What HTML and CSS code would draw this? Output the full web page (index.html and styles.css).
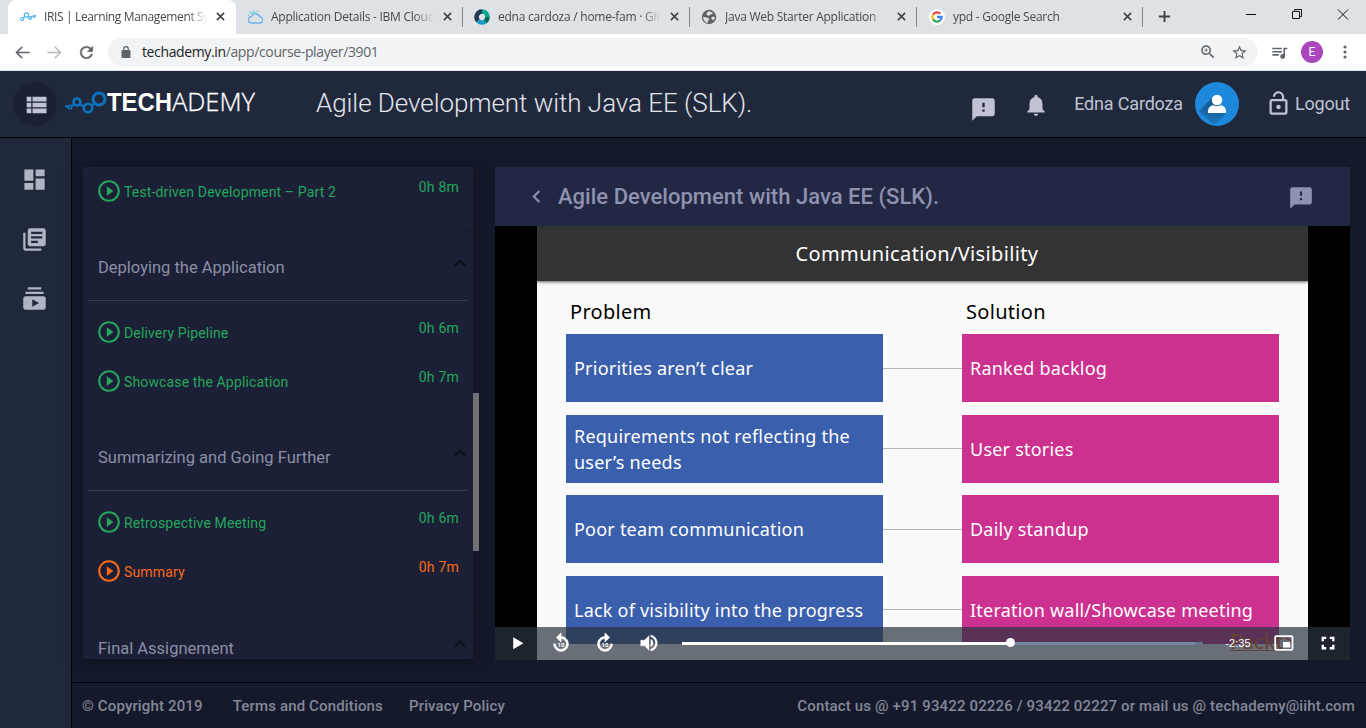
FILE: index.html
```html
<!DOCTYPE html>
<html lang="en">
<head>
<meta charset="utf-8">
<title>IRIS | Learning Management System</title>
<link rel="stylesheet" href="styles.css">
</head>
<body>
<svg class="sprite" aria-hidden="true">
  <symbol id="play" viewBox="0 0 24 24"><path d="M10 16.5l6-4.5-6-4.5v9zM12 2C6.48 2 2 6.48 2 12s4.48 10 10 10 10-4.48 10-10S17.52 2 12 2zm0 18c-4.41 0-8-3.59-8-8s3.59-8 8-8 8 3.59 8 8-3.59 8-8 8z"/></symbol>
  <symbol id="feedback" viewBox="0 0 24 24"><path d="M20 2H4c-1.1 0-1.99.9-1.99 2L2 22l4-4h14c1.1 0 2-.9 2-2V4c0-1.1-.9-2-2-2zm-7 12h-2v-2h2v2zm0-4h-2V6h2v4z"/></symbol>
  <symbol id="up" viewBox="0 0 24 24"><path d="M12 8l-6 6 1.41 1.41L12 10.83l4.59 4.58L18 14z"/></symbol>
  <symbol id="x" viewBox="0 0 10 10"><path d="M1 1l8 8M9 1l-8 8" fill="none" stroke="#3c4043" stroke-width="1.7"/></symbol>
  <symbol id="replay" viewBox="0 0 24 24"><path stroke="#fff" stroke-width=".8" d="M12 5V1L7 6l5 5V7c3.3 0 6 2.7 6 6s-2.7 6-6 6-6-2.7-6-6H4c0 4.400 3.600 8 8 8s8-3.600 8-8-3.600-8-8-8z"/></symbol>
</svg>

<div class="tabs">
  <div class="tab active">
    <svg class="fav" viewBox="0 0 16 16" fill="none" stroke="#4db2e6" stroke-width="1.200"><circle cx="2.200" cy="10" r="1.500"/><circle cx="6.500" cy="6" r="2.200"/><circle cx="10" cy="9" r="1.400"/><path d="M3.300 9l1.500-1.500M11 8.500l1.500-1.500M13 7l2.500-.5-1 2z"/></svg>
    <span class="label" style="width:163px">IRIS | Learning Management System</span>
    <svg class="close"><use href="#x"/></svg>
  </div>
  <div class="tab t2">
    <svg class="fav" viewBox="0 0 16 16" fill="none" stroke="#6fb2ee" stroke-width="1.300"><path d="M4 14h8.500a3 3 0 0 0 .3-6A4.500 4.500 0 0 0 4.500 7.500 3.300 3.300 0 0 0 4 14z"/><path stroke="#5fd0dc" d="M4 5a3.500 3.500 0 0 1 5-1M1 6h1M2.500 2.500l1 1M6.500.5v1.300M10.500 2l-.7 1"/></svg>
    <span class="label" style="width:163px">Application Details - IBM Cloud</span>
    <svg class="close"><use href="#x"/></svg>
  </div>
  <div class="tab t3">
    <svg class="fav" viewBox="0 0 16 16" fill="none" stroke-width="4.600"><path stroke="#00a78f" d="M8 2.500A5.500 5.500 0 0 1 13.500 8"/><path stroke="#006d5d" d="M13.500 8A5.500 5.500 0 0 1 11 12.600"/><path stroke="#1b9dc4" d="M11 12.600A5.500 5.500 0 0 1 4 11.700"/><path stroke="#243a55" d="M4 11.700A5.500 5.500 0 0 1 8 2.500"/></svg>
    <span class="label" style="width:163px">edna cardoza / home-fam · GitLab</span>
    <svg class="close"><use href="#x"/></svg>
  </div>
  <div class="tab t4">
    <svg class="fav" viewBox="0 0 16 16"><circle cx="8" cy="8" r="7.200" fill="#5f6368"/><path fill="#dee1e6" d="M2.200 7.500c1.500 1 2.500.8 4 1.300.8.300 1.800 0 1.800 1.500 0 .8-1.200 1-1.200 2.200 0 .8.300 1.300.5 1.500-2.800-.3-5.200-2.600-5.100-6.500zM5.500 4c1-.3 1.500-1.500 3-1.700l1 .7c.8.400 1.700.3 2.300.7-.2 1-.8 1.500-1.800 1.500-.8 0-.8.900-1.700 1.200-1 .2-2.300.2-2.600-.6-.3-.700.500-1 .200-1.800zM11 8c1-.5 2 .3 2.800 0-.1 1.600-.8 3-1.800 3.700-.3-.9-.5-1.400-1.200-1.700-.8-.4-.5-1.500.2-2z"/></svg>
    <span class="label" style="width:163px">Java Web Starter Application</span>
    <svg class="close"><use href="#x"/></svg>
  </div>
  <div class="tab t5">
    <svg class="fav" viewBox="0 0 16 16"><circle cx="8" cy="8" r="8" fill="#fff"/><g fill="none" stroke-width="2.300"><path stroke="#ea4335" d="M4 5.700A4.700 4.700 0 0 1 11.300 4.700"/><path stroke="#fbbc05" d="M4 10.400A4.700 4.700 0 0 1 4 5.700"/><path stroke="#34a853" d="M11 11.600A4.700 4.700 0 0 1 4 10.400"/><path stroke="#4285f4" d="M8 8h4.700A4.700 4.700 0 0 1 11 11.600"/></g></svg>
    <span class="label" style="width:161px">ypd - Google Search</span>
    <svg class="close"><use href="#x"/></svg>
  </div>
  <svg class="newtab" viewBox="0 0 14 14"><path d="M7 1v12M1 7h12" stroke="#3c4043" stroke-width="2"/></svg>
  <svg class="winctl" viewBox="0 0 104 12" fill="none" stroke="#111" stroke-width="1"><path d="M0 6.500h10M46.500 3.500h7v7h-7zM48.500 3.500v-2h7v7h-2M92 1.500l10 10M102 1.500l-10 10"/></svg>
</div>
<div class="toolbar">
  <div class="nav">
    <svg viewBox="0 0 24 24" fill="#5f6368"><path d="M21 11H6.830l5.580-5.590L11 4l-8 8 8 8 1.410-1.410L6.830 13H21v-2z"/></svg>
    <svg viewBox="0 0 24 24" fill="#b9bbbe"><path d="M3 11h14.170l-5.580-5.590L13 4l8 8-8 8-1.410-1.410L17.170 13H3v-2z"/></svg>
    <svg viewBox="0 0 24 24" fill="#5f6368" stroke="#5f6368" stroke-width=".5"><path d="M17.650 6.350C16.200 4.900 14.210 4 12 4c-4.420 0-7.990 3.580-7.990 8s3.570 8 7.990 8c3.730 0 6.840-2.550 7.730-6h-2.080c-.82 2.330-3.040 4-5.650 4-3.310 0-6-2.690-6-6s2.690-6 6-6c1.660 0 3.140.69 4.220 1.780L13 11h7V4l-2.350 2.350z"/></svg>
  </div>
  <div class="omnibox">
    <svg class="lock" viewBox="0 0 10 12"><rect x=".5" y="4" width="9" height="8" rx="1" fill="#5f6368"/><path d="M2.700 4.500V3a2.300 2.300 0 0 1 4.600 0v1.500" fill="none" stroke="#5f6368" stroke-width="1.200"/></svg>
    <span class="url"><b>techademy.in</b>/app/course-player/3901</span>
    <svg class="mag" viewBox="0 0 24 24" fill="#5f6368"><path d="M15.500 14h-.79l-.28-.27C15.410 12.590 16 11.110 16 9.500 16 5.910 13.090 3 9.500 3S3 5.910 3 9.500 5.910 16 9.500 16c1.610 0 3.090-.59 4.230-1.570l.27.28v.79l5 4.990L20.490 19l-4.990-5zm-6 0C7.010 14 5 11.990 5 9.500S7.010 5 9.500 5 14 7.010 14 9.500 11.990 14 9.500 14zm2.500-4h-2v2H9v-2H7V9h2V7h1v2h2v1z"/></svg>
    <svg class="star" viewBox="0 0 24 24" fill="#5f6368"><path d="M22 9.240l-7.190-.62L12 2 9.190 8.630 2 9.240l5.460 4.730L5.820 21 12 17.270 18.180 21l-1.630-7.030L22 9.240zM12 15.400l-3.760 2.270 1-4.280-3.320-2.880 4.380-.38L12 6.100l1.710 4.040 4.380.38-3.320 2.880 1 4.280L12 15.400z"/></svg>
  </div>
  <svg class="queue" viewBox="0 0 24 24" fill="#5f6368"><path d="M15 6H3v2h12V6zm0 4H3v2h12v-2zM3 16h8v-2H3v2zM17 6v8.180c-.31-.11-.65-.18-1-.18-1.660 0-3 1.340-3 3s1.340 3 3 3 3-1.340 3-3V8h3V6h-5z"/></svg>
  <span class="profile">E</span>
  <svg class="kebab" viewBox="0 0 4 14" fill="#5f6368"><circle cx="2" cy="2" r="1.600"/><circle cx="2" cy="7" r="1.600"/><circle cx="2" cy="12" r="1.600"/></svg>
</div>

<header class="topbar">
  <div class="menu"><svg viewBox="0 0 24 24"><path d="M4 14h4v-4H4v4zm0 5h4v-4H4v4zM4 9h4V5H4v4zm5 5h12v-4H9v4zm0 5h12v-4H9v4zM9 5v4h12V5H9z"/></svg></div>
  <svg class="logo" viewBox="0 0 192 28">
    <g fill="none" stroke="#0b73bd" stroke-width="2.600"><circle cx="4" cy="18" r="1.800" stroke-width="1.500"/><circle cx="11" cy="13" r="3.500"/><circle cx="22" cy="19" r="4.300"/><circle cx="33" cy="10" r="6" stroke-width="3"/><path stroke-width="2" d="M-1 17l3 1M5.500 17l3-2M14 15.500l4 2M26 16.500l2.500-2.500"/></g>
    <text x="41" y="22" font-family="Liberation Sans" font-weight="700" font-size="25" fill="#fff" textLength="65" lengthAdjust="spacingAndGlyphs">TECH</text>
    <text x="106" y="22" font-family="Open Sans" font-size="25" font-weight="300" fill="#fff" stroke="#fff" stroke-width=".3" textLength="83" lengthAdjust="spacingAndGlyphs">ADEMY</text>
  </svg>
  <h1>Agile Development with Java EE (SLK).</h1>
  <div class="user">
    <svg class="i1"><use href="#feedback"/></svg>
    <svg class="i2" viewBox="0 0 24 24"><path d="M12 22c1.100 0 2-.9 2-2h-4c0 1.100.89 2 2 2zm6-6v-5c0-3.070-1.640-5.640-4.500-6.320V4c0-.83-.67-1.500-1.500-1.500s-1.500.67-1.500 1.500v.68C7.630 5.360 6 7.920 6 11v5l-2 2v1h16v-1l-2-2z"/></svg>
    <span class="name">Edna Cardoza</span>
    <svg class="avatar" viewBox="0 0 44 44"><defs><linearGradient id="sh" x1=".6" y1="0" x2=".4" y2="1"><stop offset="0" stop-color="#124f7d"/><stop offset="1" stop-color="#1c7cc6"/></linearGradient><clipPath id="round"><circle cx="22" cy="22" r="22"/></clipPath></defs><circle cx="22" cy="22" r="22" fill="#1e88dc"/><path clip-path="url(#round)" fill="url(#sh)" d="M18 15L4 29l15 15 12-13z"/><circle cx="22" cy="18" r="5.300" fill="#fff"/><path d="M13 31v-2c0-3 2-5 5-6 2 1.500 6 1.500 8 0 3 1 5 3 5 6v2z" fill="#fff"/></svg>
    <svg class="i3" viewBox="0 0 24 24"><path d="M12 17c1.100 0 2-.9 2-2s-.9-2-2-2-2 .9-2 2 .9 2 2 2zm6-9H6c-1.100 0-2 .9-2 2v10c0 1.100.9 2 2 2h12c1.100 0 2-.9 2-2V10c0-1.100-.9-2-2-2zm0 12H6V10h12v10z"/><path d="M15.100 9V6c0-1.710-1.390-3.100-3.100-3.100S8.900 4.290 8.900 6H7c0-2.760 2.240-5 5-5s5 2.240 5 5v3z"/></svg>
    <span class="logout">Logout</span>
  </div>
</header>

<div class="app">
  <aside class="rail">
    <svg viewBox="0 0 24 24"><path d="M3 13h8V3H3v10zm0 8h8v-6H3v6zm10 0h8V11h-8v10zm0-18v6h8V3h-8z"/></svg>
    <svg viewBox="0 0 24 24"><path d="M4 6H2v14c0 1.100.9 2 2 2h14v-2H4V6zm16-4H8c-1.100 0-2 .9-2 2v12c0 1.100.9 2 2 2h12c1.100 0 2-.9 2-2V4c0-1.100-.9-2-2-2zm-1 5H9V5h10v2zm0 4H9V9h10v2zm-4 4H9v-2h6v2z"/></svg>
    <svg viewBox="0 0 24 24"><path d="M20 8H4V6h16v2zm-2-6H6v2h12V2zm4 10v8c0 1.100-.9 2-2 2H4c-1.100 0-2-.9-2-2v-8c0-1.100.9-2 2-2h16c1.100 0 2 .9 2 2zm-6 4l-6-3.270v6.530L16 16z"/></svg>
  </aside>
  <div class="page">
    <main class="content">
      <div class="outline">
        <div class="cards">
          <section class="card first">
            <div class="item"><svg><use href="#play"/></svg><span>Test-driven Development – Part 2</span><time>0h 8m</time></div>
          </section>
          <section class="card">
            <h2>Deploying the Application<svg><use href="#up"/></svg></h2>
            <div class="item"><svg><use href="#play"/></svg><span>Delivery Pipeline</span><time>0h 6m</time></div>
            <div class="item"><svg><use href="#play"/></svg><span>Showcase the Application</span><time>0h 7m</time></div>
          </section>
          <section class="card">
            <h2>Summarizing and Going Further<svg><use href="#up"/></svg></h2>
            <div class="item"><svg><use href="#play"/></svg><span>Retrospective Meeting</span><time>0h 6m</time></div>
            <div class="item current"><svg><use href="#play"/></svg><span>Summary</span><time>0h 7m</time></div>
          </section>
          <section class="card">
            <h2>Final Assignement<svg><use href="#up"/></svg></h2>
          </section>
        </div>
        <div class="scroll"><div class="thumb"></div></div>
      </div>
      <section class="player">
        <div class="phead">
          <svg class="back" viewBox="0 0 24 24"><path d="M15.410 7.410L14 6l-6 6 6 6 1.410-1.410L10.830 12z"/></svg>
          <h3>Agile Development with Java EE (SLK).</h3>
          <svg class="pfb"><use href="#feedback"/></svg>
        </div>
        <div class="video">
          <div class="slide">
            <div class="stitle"><span>Communication/Visibility</span></div>
            <div class="board">
              <div class="cap c1">Problem</div><div></div><div class="cap c2">Solution</div>
              <div class="box">Priorities aren’t clear</div><i></i><div class="box pink">Ranked backlog</div>
              <div class="box"><span>Requirements not reflecting the<br>user’s needs</span></div><i></i><div class="box pink">User stories</div>
              <div class="box">Poor team communication</div><i></i><div class="box pink">Daily standup</div>
              <div class="box">Lack of visibility into the progress</div><i></i><div class="box pink">Iteration wall/Showcase meeting</div>
            </div>
            <div class="mark">Packt&gt;</div>
          </div>
          <div class="controls">
            <div class="btn"><svg viewBox="0 0 22 22"><path d="M7.200 5.200v12l10.200-6z"/></svg></div>
            <div class="btn"><svg viewBox="0 0 24 24"><use href="#replay"/><text x="12" y="16" class="ten">10</text></svg></div>
            <div class="btn"><svg viewBox="0 0 24 24"><g transform="translate(24) scale(-1 1)"><use href="#replay"/></g><text x="12" y="16" class="ten">10</text></svg></div>
            <div class="btn"><svg viewBox="0 0 24 24"><path d="M3 9v6h4l5 5V4L7 9H3zm13.500 3c0-1.770-1.020-3.290-2.500-4.030v8.050c1.480-.73 2.500-2.250 2.500-4.020zM14 3.230v2.060c2.890.86 5 3.540 5 6.710s-2.110 5.850-5 6.710v2.060c4.010-.91 7-4.490 7-8.770s-2.990-7.860-7-8.770z" stroke="#fff" stroke-width=".5"/></svg></div>
            <div class="progress"><div class="loaded"></div><div class="played" style="width:329px"></div></div>
            <div class="remain">-2:35</div>
            <div class="btn"><svg viewBox="0 0 22 22"><rect x="2.200" y="4.200" width="17.300" height="13.600" rx="1" fill="none" stroke="#fff" stroke-width="1.800"/><rect x="10" y="10" width="7.200" height="5.500"/></svg></div>
            <div class="btn"><svg viewBox="0 0 22 22"><path d="M4.600 4.700h4.600v2.400H7v2.200H4.600zM12.800 4.700h4.700v4.600h-2.400V7.100h-2.300zM4.600 12.700H7V15h2.200v2.400H4.600zM15.100 12.700h2.400v4.700h-4.700V15h2.300z"/></svg></div>
          </div>
        </div>
      </section>
    </main>
    <footer class="footer">
      <span class="f1">© Copyright 2019</span><span class="f2">Terms and Conditions</span><span class="f3">Privacy Policy</span>
      <span class="contact">Contact us @ +91 93422 02226 / 93422 02227 or mail us @ techademy@iiht.com</span>
    </footer>
  </div>
</div>
</body>
</html>
```

FILE: styles.css
```css
* { box-sizing: border-box; }
body { margin: 0; width: 1366px; height: 728px; overflow: hidden; font-family: Roboto, sans-serif; background: #151a2a; display: flex; flex-direction: column; }
svg { display: block; flex: none; }
.sprite { width: 0; height: 0; position: absolute; }
h1, h2, h3 { margin: 0; font-weight: 400; }

/* browser frame */
.tabs { height: 34px; flex: none; background: #dee1e6; display: flex; padding-left: 8px; font: 12px "Open Sans", sans-serif; color: #45494d; position: relative; }
.tab { height: 34px; display: flex; align-items: center; padding: 0 0 1px 11px; width: 227px; }
.tab.active { width: 228px; background: #fff; border-radius: 8px 8px 0 0; padding-left: 12px; }
.t2, .t3, .t4, .t5 { background: linear-gradient(#85898e, #85898e) right center / 1px 20px no-repeat; }
.t5 { width: 226px; padding-left: 12px; }
.fav { width: 16px; height: 16px; margin-right: 8px; }
.label { overflow: hidden; white-space: nowrap; letter-spacing: -.25px; -webkit-mask-image: linear-gradient(90deg, #000 88%, transparent); mask-image: linear-gradient(90deg, #000 88%, transparent); }
.active .label { letter-spacing: -.36px; }
.close { width: 9px; height: 9px; margin-left: 8.5px; }
.newtab { width: 13px; height: 13px; margin: 10px 0 0 15px; }
.winctl { width: 104px; height: 12px; margin: 8px 0 0 75px; }
.toolbar { height: 37px; flex: none; background: #fff; border-bottom: 1px solid #dfe5e3; display: flex; align-items: center; }
.nav { display: flex; gap: 13px; padding-left: 12.5px; width: 108px; }
.nav svg { width: 19px; height: 19px; }
.omnibox { width: 1150px; height: 28px; border-radius: 14px; background: #f1f3f4; display: flex; align-items: center; padding-left: 13px; font: 14px "Open Sans", sans-serif; color: #5f6368; }
.lock { width: 10px; height: 12px; margin-right: 11px; }
.url { flex: 1; letter-spacing: -.37px; padding-bottom: 1px; }
.url b { font-weight: 400; color: #202124; }
.mag { width: 18px; height: 18px; margin-right: 14px; }
.star { width: 17px; height: 17px; margin-right: 10px; }
.queue { width: 19px; height: 19px; margin: 0 12px; }
.profile { width: 22px; height: 22px; border-radius: 50%; background: #ab47bc; color: #fff; font-size: 12px; line-height: 22px; text-align: center; }
.kebab { width: 4px; height: 14px; margin-left: 20px; }

/* application header */
.topbar { height: 67px; flex: none; background: #20283c; border-bottom: 1px solid #020307; display: flex; align-items: center; fill: #bfc3d3; color: #bfc3d3; }
.menu { width: 44px; height: 44px; margin: 0 0 0 13px; border-radius: 50%; background: #1b2036; display: grid; place-items: center; }
.menu svg { width: 28px; height: 28px; margin: 1px 0 0 1px; }
.logo { width: 192px; height: 28px; margin: 0 0 3px 9px; overflow: visible; }
h1 { font-weight: 300; font-size: 26px; color: #e3e5ec; margin: 0 0 2px 58px; white-space: nowrap; letter-spacing: -.05px; }
.user { margin-left: auto; display: flex; align-items: center; padding-right: 16px; font-size: 18px; }
.i1 { width: 27px; height: 27px; margin: 10px 26px 0 0; }
.i2 { width: 26px; height: 26px; margin: 1px 25px 0 0; }
.name, .logout { letter-spacing: -.18px; padding-bottom: 2px; }
.avatar { width: 44px; height: 44px; margin: 0 26px 0 12px; }
.i3 { width: 27px; height: 27px; margin: 0 3px 1px 0; }

.app { flex: 1; display: flex; min-height: 0; }
.rail { width: 72px; background: #20283c; border-right: 1px solid #020307; display: flex; flex-direction: column; align-items: center; gap: 32px; padding: 28px 2px 0 0; fill: #b0b5c5; }
.rail svg { width: 27px; height: 27px; }
.rail svg:nth-child(n+2) { position: relative; top: 1px; }
.page { flex: 1; display: flex; flex-direction: column; }
.content { height: 544px; padding: 29px 16px 0 11px; display: flex; align-items: flex-start; gap: 16px; }

/* course outline */
.outline { width: 396px; height: 492px; display: flex; box-shadow: 0 3px 14px rgba(10, 10, 24, .55); overflow: hidden; }
.cards { width: 390px; height: 492px; overflow: hidden; background: #181c30; }
.card { height: 189px; margin-bottom: 1px; border-radius: 4px; background: #1b2036; }
.card.first { height: 64px; border-radius: 0 0 4px 4px; }
.card.first .item { height: 47px; }
h2 { height: 69px; margin: 0 6px 6px 5px; padding: 3px 0 0 10px; border-bottom: 1px solid #373c50; color: #8b8fa6; font-size: 16.5px; display: flex; align-items: center; justify-content: space-between; }
h2 svg { width: 22px; height: 22px; margin: 0 -4px 9px 0; fill: #0b0d18; }
.card:last-child h2 { padding-top: 5px; }
.item { height: 49px; padding: 0 14px 0 13px; display: flex; align-items: center; color: #24a65c; fill: #24a65c; font-size: 14px; letter-spacing: .14px; }
.item svg { width: 26px; height: 26px; margin-right: 2px; }
.item span { padding-top: 3px; }
.item time { margin: 0 0 8px auto; letter-spacing: .2px; }
.item.current { color: #fa6a16; fill: #fa6a16; }
.scroll { width: 6px; background: #14172a; padding-top: 226px; }
.thumb { height: 158px; background: #717171; }

/* player */
.player { width: 855px; }
.phead { height: 59px; background: #222843; display: flex; align-items: center; padding: 0 36px 0 29px; fill: #8e92b0; color: #8e92b0; }
.back { width: 25px; height: 25px; }
h3 { font-size: 22px; font-weight: 500; margin-left: 9px; flex: 1; letter-spacing: .02px; }
.pfb { width: 26px; height: 26px; margin-top: 2px; }
.video { height: 434px; background: #000; position: relative; padding: 0 42px; }
.slide { height: 434px; background: #fafafa; position: relative; font-family: "Noto Sans", sans-serif; overflow: hidden; }
.stitle { height: 55px; background: #333; color: #fff; font-size: 20px; line-height: 55px; letter-spacing: .36px; text-align: center; padding-right: 11px; box-shadow: 0 1px 3px rgba(0, 0, 0, .65); }
.board { display: grid; grid-template-columns: 317px 79px 317px; grid-template-rows: 53px repeat(4, 68px); row-gap: 12.6px; padding-left: 29px; margin-top: -12.600px; }
.cap { font-size: 20px; line-height: 28px; letter-spacing: .3px; color: #000; padding: 30px 0 0 4px; }
.box { background: #3a5fac; color: #fff; font-size: 18px; line-height: 26px; letter-spacing: .22px; padding: 0 8px; display: flex; align-items: center; white-space: nowrap; }
.box.pink { background: #cc318f; }
.board i { height: 1px; background: #b4b4b4; align-self: center; }
.mark { position: absolute; left: 693px; bottom: 9px; width: 59px; font: 400 22px/19px Lato, sans-serif; color: #e8641e; border-bottom: 1px solid #e8641e; }
.controls { position: absolute; left: 0; right: 0; bottom: 0; height: 33px; background: rgba(43, 51, 63, .7); display: flex; align-items: center; padding-bottom: 1px; color: #fff; fill: #fff; }
.btn { width: 44px; display: grid; place-items: center; }
.btn svg { width: 22px; height: 22px; }
.ten { font: 700 6.500px Roboto, sans-serif; text-anchor: middle; }
.progress { width: 521px; height: 3px; margin: 1px 11px 0; background: #66758e; position: relative; }
.loaded { position: absolute; left: 0; top: 0; width: 513px; height: 3px; background: #73859f; }
.played { position: absolute; left: 0; top: 0; height: 3px; background: #fff; }
.played::after { content: ""; position: absolute; right: -4px; top: -4px; width: 9px; height: 9px; border-radius: 50%; background: #fff; }
.remain { width: 48px; text-align: center; font: 11px/32px "Liberation Sans", sans-serif; }

.footer { flex: 1; border-top: 1px solid #020307; display: flex; align-items: center; padding: 0 11px 0 10px; font-size: 15px; font-weight: 500; letter-spacing: .15px; color: #838898; white-space: nowrap; }
.f1 { margin-right: 30px; }
.f2 { margin-right: 26px; }
.contact { margin-left: auto; }
```
